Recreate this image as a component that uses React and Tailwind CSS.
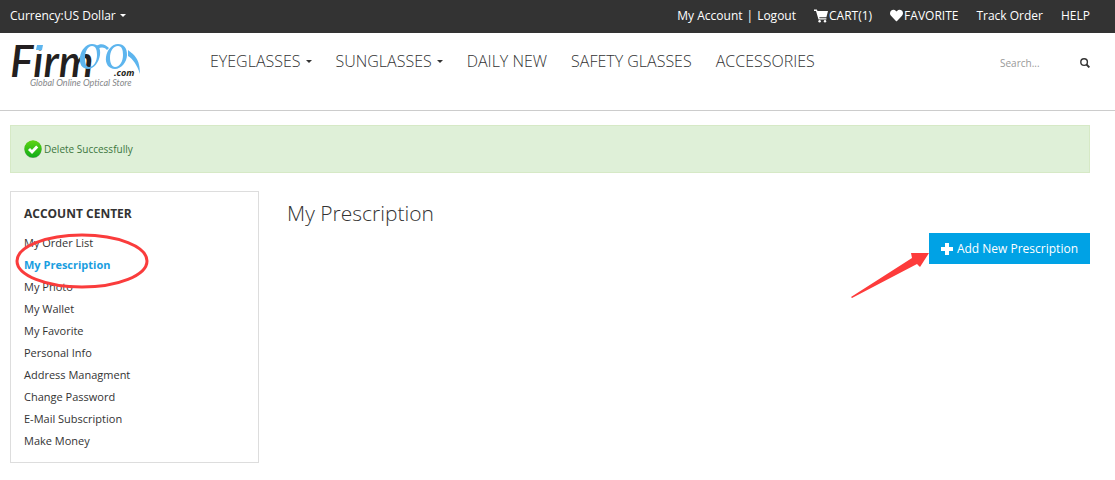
import { FaHeart } from 'react-icons/fa'

const NAV_ITEMS = [
  { label: 'EYEGLASSES', menu: true },
  { label: 'SUNGLASSES', menu: true },
  { label: 'DAILY NEW' },
  { label: 'SAFETY GLASSES' },
  { label: 'ACCESSORIES' },
]

const ACCOUNT_LINKS = [
  'My Order List',
  'My Prescription',
  'My Photo',
  'My Wallet',
  'My Favorite',
  'Personal Info',
  'Address Managment',
  'Change Password',
  'E-Mail Subscription',
  'Make Money',
]

function Caret() {
  return (
    <svg viewBox="0 0 6 3" className="h-[3px] w-[6px] fill-current" aria-hidden="true">
      <path d="M0 0h6L3 3z" />
    </svg>
  )
}

function CartIcon() {
  return (
    <svg viewBox="0 0 14 14" className="size-[14px] fill-current" aria-hidden="true">
      <path d="M0 .5h2.8l.7 1.6H14L12.4 8.2H5.2l.4 1h6.8v1.3H4.5L2 1.9H0z" />
      <circle cx="5.6" cy="12.2" r="1.2" />
      <circle cx="11" cy="12.2" r="1.2" />
    </svg>
  )
}

function SearchIcon() {
  return (
    <svg viewBox="0 0 10 10" className="size-[10px]" fill="none" stroke="currentColor" aria-hidden="true">
      <circle cx="4.1" cy="4.1" r="3.3" strokeWidth="1.4" />
      <path d="M6.5 6.5l2.9 2.9" strokeWidth="1.9" />
    </svg>
  )
}

function PlusIcon() {
  return (
    <svg viewBox="0 0 12 12" className="size-3 fill-current" aria-hidden="true">
      <path d="M4 0h4v4h4v4H8v4H4V8H0V4h4z" />
    </svg>
  )
}

function Logo() {
  return (
    <svg viewBox="0 0 132 48" className="block h-12 w-[132px] overflow-visible" role="img" aria-label="Firmoo.com">
      <text x="0" y="37" fill="#231f20" className="font-['Lato',sans-serif] text-[44px] font-semibold italic">
        Firm
      </text>
      <path d="M25 2h9v8h-9z" fill="#fff" />
      <path d="M27 5h6l-1 5h-6z" fill="#5db5ee" />
      <g fill="#5db5ee" fillRule="evenodd">
        <path d="M82 4c6 0 9 4 8 11s-6 14-12 14-9-5-8-12S76 4 82 4zm0 2c-4 0-7 5-7 12 0 5 1 9 4 9 5 0 8-6 8-12 0-5-1-9-5-9z" />
        <path d="M108 4c6 0 9 4 9 11s-6 14-12 14-10-5-9-12 6-13 12-13zm0 2c-5 0-8 5-8 12 0 5 2 9 5 9 5 0 8-6 8-12 0-5-1-9-5-9z" />
        <path d="M86 6c5-3 9-2 13 2l-2 2c-3-3-6-3-9-1z" />
        <path d="M118 10c6 5 12 8 12 24-3-9-7-15-12-18z" />
      </g>
      <text x="104" y="36" fill="#231f20" className="font-['Open_Sans',sans-serif] text-[9px] font-bold italic">
        .com
      </text>
      <text x="20" y="46" fill="#85878a" className="font-['Lato',sans-serif] text-[9px] italic">
        Global Online Optical Store
      </text>
    </svg>
  )
}

function SuccessIcon() {
  return (
    <svg viewBox="0 0 18 18" className="size-[18px] shrink-0" aria-hidden="true">
      <defs>
        <linearGradient id="ok" x1="0" y1="0" x2="0" y2="1">
          <stop offset="0" stopColor="#5fd414" />
          <stop offset="1" stopColor="#10ad19" />
        </linearGradient>
      </defs>
      <circle cx="9" cy="9.4" r="8.6" fill="#8d9f8b" />
      <circle cx="9" cy="8.8" r="8.6" fill="url(#ok)" />
      <path d="M5 9l3 3 5.2-5.6" fill="none" stroke="#fff" strokeWidth="2.9" />
    </svg>
  )
}

function TopBar() {
  return (
    <div className="flex h-[33px] items-center justify-between bg-[#333] pr-[25px] pb-[2px] pl-[10px] text-xs leading-5 text-white">
      <button type="button" className="flex items-center gap-1">
        Currency:US Dollar
        <Caret />
      </button>
      <div className="flex items-center gap-[18px]">
        <div className="flex gap-1">
          <a href="#account">My Account</a>
          <span>|</span>
          <a href="#logout">Logout</a>
        </div>
        <a href="#cart" className="flex items-center gap-px">
          <CartIcon />
          CART(1)
        </a>
        <a href="#favorite" className="flex items-center gap-px">
          <FaHeart className="size-[13px]" />
          FAVORITE
        </a>
        <a href="#track">Track Order</a>
        <a href="#help">HELP</a>
      </div>
    </div>
  )
}

function Header() {
  return (
    <header className="flex h-[78px] items-start border-b border-[#ccc] pr-[25px] pl-[10px]">
      <a href="#home" className="mt-[7px] w-[200px] shrink-0">
        <Logo />
      </a>
      <nav className="mt-4 flex gap-6 text-base leading-6 font-light whitespace-nowrap">
        {NAV_ITEMS.map((item) => (
          <a key={item.label} href="#shop" className="flex items-center gap-[5px]">
            {item.label}
            {item.menu && <Caret />}
          </a>
        ))}
      </nav>
      <form className="mt-5 ml-auto flex items-center" onSubmit={(e) => e.preventDefault()}>
        <input
          type="text"
          aria-label="Search"
          placeholder="Search..."
          className="w-20 text-[10px] leading-5 outline-none placeholder:text-[#999]"
        />
        <button type="submit" aria-label="Search">
          <SearchIcon />
        </button>
      </form>
    </header>
  )
}

function Sidebar() {
  return (
    <aside className="relative w-[249px] shrink-0 border border-[#ddd] px-[13px] pt-3 pb-[10px]">
      <h2 className="text-xs leading-5 font-bold">ACCOUNT CENTER</h2>
      <ul className="mt-2 text-[11px] leading-[22px]">
        {ACCOUNT_LINKS.map((label) => (
          <li key={label}>
            <a href="#account" className={label === 'My Prescription' ? 'font-bold text-[#1a9ee0]' : ''}>
              {label}
            </a>
          </li>
        ))}
      </ul>
      <svg
        viewBox="0 0 134 56"
        className="pointer-events-none absolute top-[41px] left-[4px] h-14 w-[134px]"
        aria-hidden="true"
      >
        <ellipse cx="67" cy="28" rx="65" ry="26" fill="none" stroke="#fa3c3c" strokeWidth="3" />
      </svg>
    </aside>
  )
}

export default function App() {
  return (
    <div className="bg-white font-['Open_Sans',sans-serif] text-[#333]">
      <TopBar />
      <Header />
      <main className="pt-[14px] pr-[25px] pb-4 pl-[10px]">
        <div
          role="status"
          className="flex h-12 items-center gap-[2px] border border-[#d6e9c6] bg-[#dff0d8] px-[13px] text-[10px] text-[#3c763d]"
        >
          <SuccessIcon />
          Delete Successfully
        </div>
        <div className="mt-[18px] flex items-start gap-7">
          <Sidebar />
          <section className="flex-1 pt-2">
            <h1 className="text-[21px] leading-7 font-light">My Prescription</h1>
            <div className="mt-[6px] flex justify-end">
              <button
                type="button"
                className="relative flex h-[31px] items-center gap-1 bg-[#00a2e5] px-3 text-xs whitespace-nowrap text-white"
              >
                <PlusIcon />
                Add New Prescription
                <svg
                  viewBox="0 0 78 46"
                  className="pointer-events-none absolute top-[19px] right-full h-[46px] w-[78px]"
                  aria-hidden="true"
                >
                  <path d="M0 45L61 6 60 1 78 1 69 15 66 12 1 46z" fill="#fd3b3b" />
                </svg>
              </button>
            </div>
          </section>
        </div>
      </main>
    </div>
  )
}
